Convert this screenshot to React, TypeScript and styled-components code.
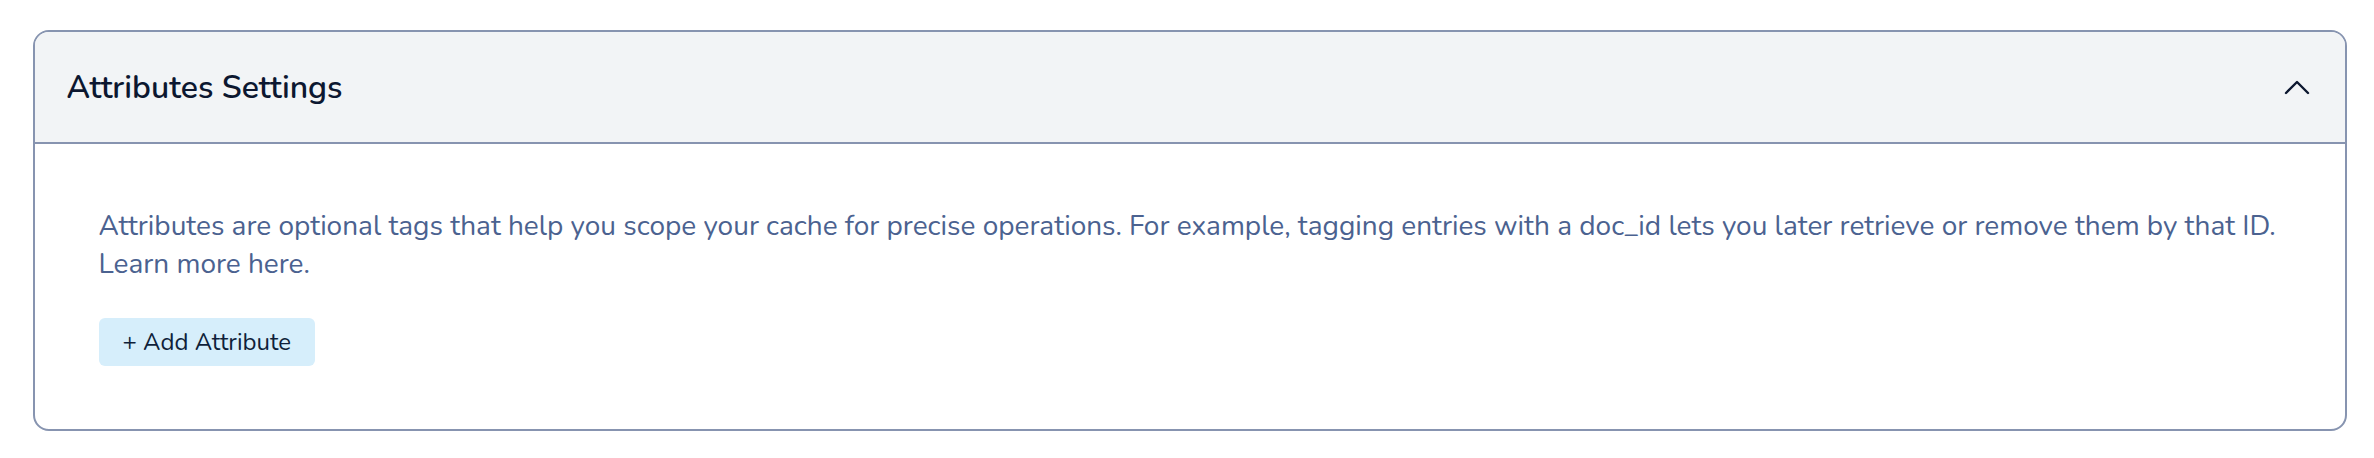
import React from "react";
import styled, { createGlobalStyle } from "styled-components";

const Global = createGlobalStyle`
  html, body { margin: 0; padding: 0; background: #ffffff; }
  body { font-family: "Nunito", "Open Sans", "Noto Sans", sans-serif; }
  * { box-sizing: border-box; }
`;

const Page = styled.div`
  padding: 30px 27px 0 33px;
`;

const Card = styled.section`
  border: 2px solid #8794b0;
  border-radius: 16px;
  overflow: hidden;
  background: #ffffff;
`;

const Header = styled.header`
  display: flex;
  align-items: center;
  justify-content: space-between;
  height: 112px;
  padding: 0 35px 0 31.5px;
  background: #f2f4f6;
  border-bottom: 2px solid #8794b0;
`;

const Title = styled.h2`
  margin: 0;
  font-size: 32px;
  font-weight: 600;
  color: #0c1730;
  letter-spacing: 0;
`;

const Toggle = styled.button`
  display: flex;
  align-items: center;
  justify-content: center;
  padding: 0;
  border: 0;
  background: transparent;
  color: #0c1730;
  cursor: pointer;
`;

const Body = styled.div`
  padding: 64px 64px 63px 63.5px;
`;

const Description = styled.p`
  margin: 0 0 35px;
  font-size: 28px;
  line-height: 37.5px;
  color: #4b6290;
`;

const AddButton = styled.button`
  display: inline-flex;
  align-items: center;
  height: 48px;
  padding: 0 24px;
  border: 0;
  border-radius: 6px;
  background: #d6eefb;
  color: #0f1f3a;
  font-family: inherit;
  font-size: 24px;
  cursor: pointer;
`;

export default function App() {
  return (
    <>
      <Global />
      <Page>
        <Card>
          <Header>
            <Title>Attributes Settings</Title>
            <Toggle aria-label="Collapse">
              <svg width="26" height="16" viewBox="0 0 26 16" fill="none">
                <path d="M2 14 L13 3 L24 14" stroke="currentColor" strokeWidth="2.4" strokeLinecap="round" strokeLinejoin="round" />
              </svg>
            </Toggle>
          </Header>
          <Body>
            <Description>
              Attributes are optional tags that help you scope your cache for precise operations. For example, tagging entries with a doc_id lets you later retrieve or remove them by that ID.
              <br />
              Learn more here.
            </Description>
            <AddButton>+ Add Attribute</AddButton>
          </Body>
        </Card>
      </Page>
    </>
  );
}
